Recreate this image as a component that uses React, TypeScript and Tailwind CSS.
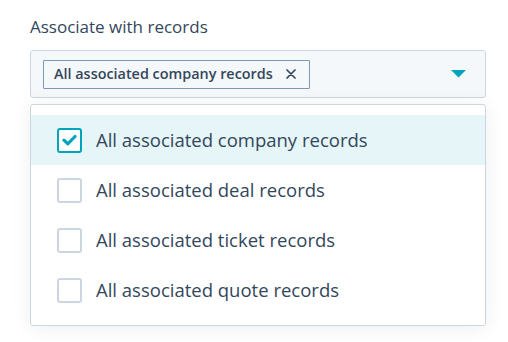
import React from "react";

const items = [
  { label: "All associated company records", checked: true },
  { label: "All associated deal records", checked: false },
  { label: "All associated ticket records", checked: false },
  { label: "All associated quote records", checked: false },
];

export default function App() {
  return (
    <div
      className="w-[508px] h-[342px] bg-white pl-[30px] pr-[22px] pt-[15px] overflow-hidden text-[#33475b]"
      style={{ fontFamily: "'Open Sans', Lato, sans-serif" }}
    >
      <div className="text-[17px] leading-[24px] mb-[11px]">Associate with records</div>
      <div className="h-[48px] w-[456px] bg-[#f5f8fa] border border-[#cbd6e2] rounded-[3px] flex items-center pl-[12px] pr-[19px]">
        <div className="h-[29px] border border-[#7c98b6] bg-[#f5f8fa] flex items-center pl-[10px] pr-[13px] rounded-[1px]">
          <span className="text-[14.4px] font-semibold leading-none text-[#33475b]">
            All associated company records
          </span>
          <svg width="10" height="10" viewBox="0 0 10 10" className="ml-[13px]">
            <path d="M1 1 L9 9 M9 1 L1 9" stroke="#33475b" strokeWidth="1.7" strokeLinecap="round" />
          </svg>
        </div>
        <div className="flex-1" />
        <svg width="15" height="8" viewBox="0 0 15 8">
          <path d="M0 0 H15 L7.5 7.5 Z" fill="#00a4bd" />
        </svg>
      </div>
      <div className="mt-[6px] w-[456px] h-[222px] bg-white border border-[#cbd6e2] rounded-[3px] py-[10px] shadow-[0_2px_20px_0_rgba(0,0,0,0.07)]">
        {items.map((it) => (
          <div
            key={it.label}
            className={`h-[50px] flex items-center pl-[26px] ${it.checked ? "bg-[#e5f5f8]" : ""}`}
          >
            <div
              className={`w-[25px] h-[25px] rounded-[3px] flex items-center justify-center bg-white ${
                it.checked ? "border-2 border-[#00a4bd]" : "border-2 border-[#cbd6e2]"
              }`}
            >
              {it.checked && (
                <svg width="15" height="12" viewBox="0 0 15 12">
                  <path
                    d="M2 6.2 L5.8 9.8 L13 2.5"
                    stroke="#00a4bd"
                    strokeWidth="3.2"
                    fill="none"
                    strokeLinecap="round"
                    strokeLinejoin="round"
                  />
                </svg>
              )}
            </div>
            <span className="ml-[14px] text-[18.5px] leading-none text-[#33475b]">{it.label}</span>
          </div>
        ))}
      </div>
    </div>
  );
}
